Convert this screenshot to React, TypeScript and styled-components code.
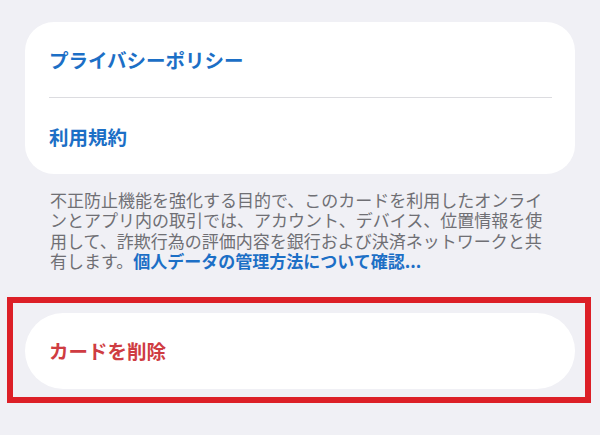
import React from "react";
import styled, { createGlobalStyle } from "styled-components";

const GlobalStyle = createGlobalStyle`
  html, body {
    margin: 0;
    padding: 0;
    background: #f0f0f5;
  }
  body {
    font-family: "Noto Sans CJK JP", "Noto Sans", sans-serif;
  }
`;

const Page = styled.div`
  width: 600px;
  height: 435px;
  background: #f0f0f5;
  padding-top: 22px;
  box-sizing: border-box;
  overflow: hidden;
`;

const Column = styled.div`
  padding: 0 25px;
`;

const Card = styled.div<{ $pill?: boolean }>`
  background: #ffffff;
  border-radius: ${(p) => (p.$pill ? "38px" : "29px")};
  padding: 0 23px 0 24px;
  display: flex;
  flex-direction: column;
`;

const Row = styled.div<{ $tone: "blue" | "red"; $divider?: boolean }>`
  height: 76px;
  display: flex;
  align-items: center;
  font-size: 19.5px;
  font-weight: 600;
  color: ${(p) => (p.$tone === "red" ? "#cf3c42" : "#1c6fc6")};
  border-bottom: ${(p) => (p.$divider ? "1px solid #dcdce0" : "none")};
  box-sizing: border-box;
`;

const Footnote = styled.p`
  margin: 16px 0 0;
  padding: 0 0 0 25px;
  width: 500px;
  font-size: 17px;
  line-height: 20.4px;
  color: #6f6f74;
`;

const Link = styled.span`
  color: #1c6fc6;
  font-weight: 600;
`;

const Highlight = styled.div`
  margin: 25px 9px 0 7px;
  border: 6px solid #dc1f27;
  padding: 10px 10px 8px 12px;
`;

export default function App() {
  return (
    <>
      <GlobalStyle />
      <Page>
        <Column>
          <Card>
            <Row $tone="blue" $divider>
              プライバシーポリシー
            </Row>
            <Row $tone="blue">利用規約</Row>
          </Card>
          <Footnote>
            不正防止機能を強化する目的で、このカードを利用したオンラインとアプリ内の取引では、アカウント、デバイス、位置情報を使用して、詐欺行為の評価内容を銀行および決済ネットワークと共有します。
            <Link>個人データの管理方法について確認...</Link>
          </Footnote>
        </Column>
        <Highlight>
          <Card $pill>
            <Row $tone="red">カードを削除</Row>
          </Card>
        </Highlight>
      </Page>
    </>
  );
}
